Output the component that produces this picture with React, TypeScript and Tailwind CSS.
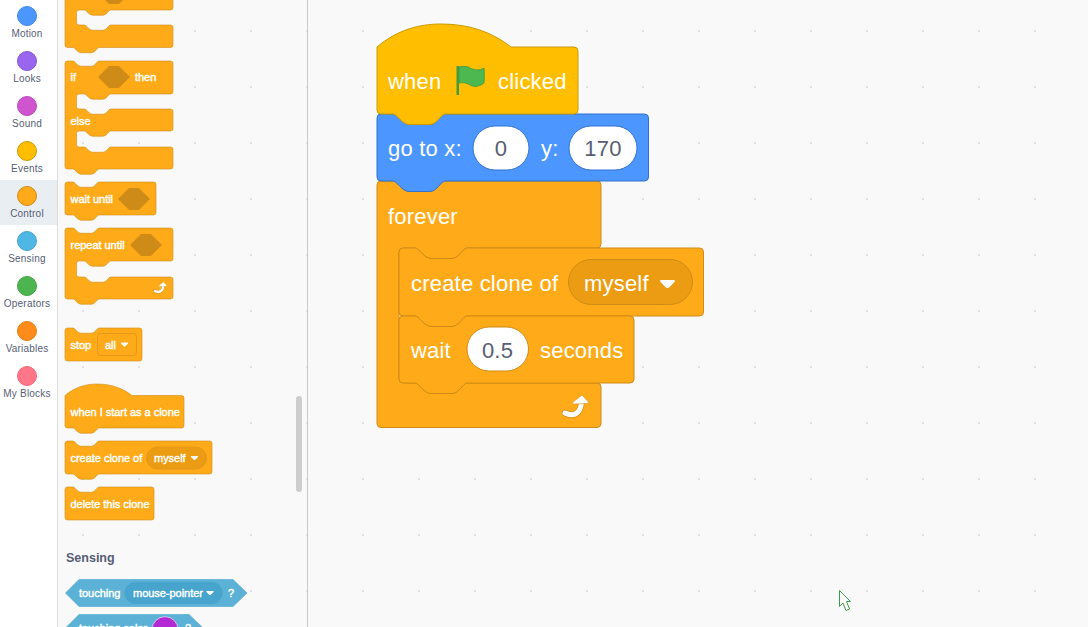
const categories = [
  { name: 'Motion', fill: 'bg-[#4c97ff]', ring: 'border-[#3f86e6]' },
  { name: 'Looks', fill: 'bg-[#9966ee]', ring: 'border-[#8455d8]' },
  { name: 'Sound', fill: 'bg-[#cf55cf]', ring: 'border-[#bd48bd]' },
  { name: 'Events', fill: 'bg-[#ffbf00]', ring: 'border-[#cc9900]' },
  { name: 'Control', fill: 'bg-[#ffab19]', ring: 'border-[#cf8b17]', active: true },
  { name: 'Sensing', fill: 'bg-[#4fb7e3]', ring: 'border-[#45a5cf]' },
  { name: 'Operators', fill: 'bg-[#4cb54f]', ring: 'border-[#45a046]' },
  { name: 'Variables', fill: 'bg-[#ff8c1a]', ring: 'border-[#e67f15]' },
  { name: 'My Blocks', fill: 'bg-[#ff7688]', ring: 'border-[#f56a7c]' },
];

const ORANGE = { fill: '#ffab19', stroke: '#cf8b17' };
const YELLOW = { fill: '#ffbf00', stroke: '#cc9900' };
const BLUE = { fill: '#4c97ff', stroke: '#3373cc' };

// notch going right along a top edge, s = 1 on the workspace, 0.5 in the palette
const notchR = (x: number, y: number, s: number) =>
  `L${x + 16 * s} ${y} C${x + 20 * s} ${y} ${x + 25 * s} ${y + 10.5 * s} ${x + 32 * s} ${y + 10.5 * s} L${x + 53 * s} ${y + 10.5 * s} C${x + 60 * s} ${y + 10.5 * s} ${x + 64 * s} ${y} ${x + 68 * s} ${y} `;
const notchL = (x: number, y: number, s: number) =>
  `L${x + 68 * s} ${y} C${x + 64 * s} ${y} ${x + 60 * s} ${y + 10.5 * s} ${x + 53 * s} ${y + 10.5 * s} L${x + 32 * s} ${y + 10.5 * s} C${x + 25 * s} ${y + 10.5 * s} ${x + 20 * s} ${y} ${x + 16 * s} ${y} `;

const corner = (s: number) => (s === 1 ? 4 : 2.5);

function stackPath(w: number, h: number, s: number, opts: { bottom?: boolean } = {}) {
  const r = corner(s);
  return (
    `M0 ${r} Q0 0 ${r} 0 ` +
    notchR(0, 0, s) +
    `L${w - r} 0 Q${w} 0 ${w} ${r} L${w} ${h - r} Q${w} ${h} ${w - r} ${h} ` +
    (opts.bottom === false ? '' : notchL(0, h, s)) +
    `L${r} ${h} Q0 ${h} 0 ${h - r} Z`
  );
}

function hatPath(w: number, h: number, s: number) {
  const r = corner(s);
  return (
    `M0 ${23 * s} C${20 * s} ${6 * s} ${42 * s} 0 ${64 * s} 0 C${92 * s} 0 ${115 * s} ${8 * s} ${134 * s} ${23 * s} ` +
    `L${w - r} ${23 * s} Q${w} ${23 * s} ${w} ${23 * s + r} L${w} ${h - r} Q${w} ${h} ${w - r} ${h} ` +
    notchL(0, h, s) +
    `L${r} ${h} Q0 ${h} 0 ${h - r} Z`
  );
}

// arms: [top, bottom] of each arm after the first, first = bottom of the first arm
function cPath(w: number, s: number, first: number, arms: [number, number][], notched = true) {
  const r = corner(s);
  const i = 22 * s + (s === 1 ? 0 : 0.5);
  let d = `M0 ${r} Q0 0 ${r} 0 ` + notchR(0, 0, s) + `L${w - r} 0 Q${w} 0 ${w} ${r} `;
  let bottom = first;
  arms.forEach(([top, end], n) => {
    d += `L${w} ${bottom - r} Q${w} ${bottom} ${w - r} ${bottom} ` + notchL(i, bottom, s);
    d += `L${i + r} ${bottom} Q${i} ${bottom} ${i} ${bottom + r} L${i} ${top - r} Q${i} ${top} ${i + r} ${top} `;
    d += notchR(i, top, s) + `L${w - r} ${top} Q${w} ${top} ${w} ${top + r} `;
    bottom = end;
    if (n === arms.length - 1) {
      d += `L${w} ${end - r} Q${w} ${end} ${w - r} ${end} `;
    }
  });
  d += (notched ? notchL(0, bottom, s) : '') + `L${r} ${bottom} Q0 ${bottom} 0 ${bottom - r} Z`;
  return d;
}

function Shape({ d, color, x = 0, y = 0, sw = 1 }: { d: string; color: { fill: string; stroke: string }; x?: number; y?: number; sw?: number }) {
  return <path d={d} transform={`translate(${x} ${y})`} fill={color.fill} stroke={color.stroke} strokeWidth={sw} strokeLinejoin="round" />;
}

function Txt({ x, y, children, anchor }: { x: number; y: number; children: string; anchor?: 'middle' }) {
  return (
    <text x={x} y={y} textAnchor={anchor} className="fill-white">
      {children}
    </text>
  );
}

function Hex({ x, y, w = 32, h = 22 }: { x: number; y: number; w?: number; h?: number }) {
  const q = h / 2;
  return <polygon points={`${x},${y} ${x + q},${y - q} ${x + w - q},${y - q} ${x + w},${y} ${x + w - q},${y + q} ${x + q},${y + q}`} fill="#cf8b17" />;
}

function Caret({ x, y, s = 1, color = '#fff' }: { x: number; y: number; s?: number; color?: string }) {
  return (
    <path
      d={`M${x} ${y} L${x + 14 * s} ${y} Q${x + 15 * s} ${y + 1.5 * s} ${x + 13.5 * s} ${y + 2.5 * s} L${x + 8.5 * s} ${y + 7.5 * s} Q${x + 7 * s} ${y + 8.5 * s} ${x + 5.5 * s} ${y + 7.5 * s} L${x + 0.5 * s} ${y + 2.5 * s} Q${x - 1 * s} ${y + 1 * s} ${x} ${y} Z`}
      fill={color}
    />
  );
}

function LoopArrow({ x, y, s = 1 }: { x: number; y: number; s?: number }) {
  return (
    <g transform={`translate(${x} ${y}) scale(${s})`}>
      <path d="M2 20 C9 23.5 17.5 22.5 18.5 9" fill="none" stroke="#cf8b17" strokeWidth={6.5} strokeLinecap="round" />
      <path d="M2 20 C9 23.5 17.5 22.5 18.5 9" fill="none" stroke="#fff" strokeWidth={5} strokeLinecap="round" />
      <path d="M19 2 L25.5 9 Q25.5 10.500 23.5 10.500 L10.5 11 Q9 10.500 10 9 Z" fill="#fff" stroke="#cf8b17" strokeWidth={0.6} strokeLinejoin="round" />
    </g>
  );
}

function Flag() {
  return (
    <g>
      <path d="M456.500 66 H459 V95 H456.500 Z" fill="#45993d" />
      <path d="M459 67 C463 66 467 66 470 68 C474 70 479 71 484 68 C484.500 73 484.500 79 484 83 C480 86 476 87.500 471 85.500 C467 83 463 82 459 83 Z" fill="#4cb84f" stroke="#45993d" strokeWidth={0.8} strokeLinejoin="round" />
    </g>
  );
}

function PaletteSvg({ className, children }: { className: string; children: React.ReactNode }) {
  return (
    <svg className={`block w-[236px] overflow-visible font-['Liberation_Sans',sans-serif] text-[11px] tracking-[-0.03px] [&_text]:stroke-white [&_text]:stroke-[0.4px] ${className}`}>
      {children}
    </svg>
  );
}

function Palette() {
  return (
    <div className="relative h-full w-[250px] shrink-0 overflow-hidden border-r border-[#c9c9c9] pl-[7px]">
      <PaletteSvg className="-mt-[23px] h-[84px]">
        <Shape sw={0.6} d={cPath(108, 0.5, 33, [[48, 70.5]])} color={ORANGE} />
        <Hex x={33} y={16} />
      </PaletteSvg>
      <PaletteSvg className="h-[121px]">
        <Shape sw={0.6} d={cPath(108, 0.5, 33, [[48, 70], [86, 108]])} color={ORANGE} />
        <Txt x={5.5} y={20}>if</Txt>
        <Hex x={33} y={16} />
        <Txt x={70} y={20}>then</Txt>
        <Txt x={5.5} y={64}>else</Txt>
      </PaletteSvg>
      <PaletteSvg className="h-[46px]">
        <Shape sw={0.6} d={stackPath(91, 33, 0.5)} color={ORANGE} />
        <Txt x={5.5} y={21}>wait until</Txt>
        <Hex x={53} y={17} />
      </PaletteSvg>
      <PaletteSvg className="h-[100px]">
        <Shape sw={0.6} d={cPath(108, 0.5, 33, [[49, 71]])} color={ORANGE} />
        <Txt x={5.5} y={21}>repeat until</Txt>
        <Hex x={65} y={17} />
        <LoopArrow x={89} y={53} s={0.5} />
      </PaletteSvg>
      <PaletteSvg className="h-[56px]">
        <Shape sw={0.6} d={stackPath(77, 33, 0.5, { bottom: false })} color={ORANGE} />
        <Txt x={5.5} y={21}>stop</Txt>
        <rect x={32.5} y={5.5} width={39} height={22} rx={3} fill="#ffab19" stroke="#e3981b" />
        <Txt x={40} y={21}>all</Txt>
        <Caret x={56} y={14.5} s={0.5} />
      </PaletteSvg>
      <PaletteSvg className="h-[57px]">
        <Shape sw={0.6} d={hatPath(119, 44, 0.5)} color={ORANGE} />
        <Txt x={5.5} y={32}>when I start as a clone</Txt>
      </PaletteSvg>
      <PaletteSvg className="h-[46px]">
        <Shape sw={0.6} d={stackPath(147, 33, 0.5)} color={ORANGE} />
        <Txt x={5.5} y={21}>create clone of</Txt>
        <rect x={81.5} y={6} width={60} height={22} rx={11} fill="#ec9c13" stroke="#e3981b" />
        <Txt x={89} y={21}>myself</Txt>
        <Caret x={126} y={15} s={0.5} />
      </PaletteSvg>
      <PaletteSvg className="h-[46px]">
        <Shape sw={0.6} d={stackPath(89, 33, 0.5, { bottom: false })} color={ORANGE} />
        <Txt x={5.5} y={21}>delete this clone</Txt>
      </PaletteSvg>
      <h3 className="mb-[6px] mt-[10px] h-[30px] pl-px text-[12.5px] font-bold leading-[30px] text-[#575e75]">Sensing</h3>
      <PaletteSvg className="h-[35px]">
        <polygon points="0.5,14 14,0.5 168,0.5 182,14 168,27.5 14,27.5" fill="#5cb1d6" stroke="#47a8d1" strokeWidth={0.6} strokeLinejoin="round" />
        <Txt x={14} y={18}>touching</Txt>
        <rect x={59.5} y={3} width={98} height={22} rx={11} fill="#47a4cd" />
        <Txt x={68} y={18}>mouse-pointer</Txt>
        <Caret x={141.5} y={12} s={0.5} />
        <Txt x={163} y={18}>?</Txt>
      </PaletteSvg>
      <PaletteSvg className="h-[35px]">
        <polygon points="0.5,14 14,0.5 124,0.5 138,14 124,27.5 14,27.5" fill="#5cb1d6" stroke="#47a8d1" strokeWidth={0.6} strokeLinejoin="round" />
        <Txt x={14} y={18}>touching color</Txt>
        <circle cx={100} cy={15.7} r={13} fill="#b32ad4" stroke="#fff" strokeWidth={0.6} />
        <Txt x={120} y={18}>?</Txt>
      </PaletteSvg>
      {/* scrollbar thumb */}
      <div className="absolute left-[238px] top-[396px] h-[96px] w-[6px] rounded-[3px] bg-[#cecdce]" />
    </div>
  );
}

function Script() {
  return (
    <svg className="absolute left-[68px] top-[23px] h-[410px] w-[340px] overflow-visible text-[22px] tracking-[0.2px]">
      <g transform="translate(-376 -23)">
        <Shape x={377} y={181} d={cPath(224, 1, 67, [[202, 246.5]], false)} color={ORANGE} />
        <Shape x={399} y={248} d={stackPath(304.5, 68, 1)} color={ORANGE} />
        <Shape x={399} y={316} d={stackPath(235, 67, 1)} color={ORANGE} />
        <Shape x={377} y={114} d={stackPath(271.5, 67, 1)} color={BLUE} />
        <Shape x={377} y={24} d={hatPath(201, 90, 1)} color={YELLOW} />

        <Txt x={388} y={89}>when</Txt>
        <Flag />
        <Txt x={498} y={89}>clicked</Txt>

        <Txt x={388} y={156}>go to x:</Txt>
        <rect x={473} y={126} width={56} height={44} rx={22} fill="#fff" stroke="#3373cc" />
        <text x={501} y={156} textAnchor="middle" fill="#575e75">0</text>
        <Txt x={541} y={156}>y:</Txt>
        <rect x={569} y={126} width={68} height={44} rx={22} fill="#fff" stroke="#3373cc" />
        <text x={603} y={156} textAnchor="middle" fill="#575e75">170</text>

        <Txt x={388} y={224}>forever</Txt>

        <Txt x={411} y={291}>create clone of</Txt>
        <rect x={568.5} y={259.5} width={124} height={45} rx={22.5} fill="#ec9c13" stroke="#cf8b17" />
        <Txt x={584} y={291}>myself</Txt>
        <Caret x={660.5} y={280} s={1} />

        <Txt x={411} y={358}>wait</Txt>
        <rect x={467} y={327} width={61.5} height={44} rx={22} fill="#fff" stroke="#cf8b17" />
        <text x={497.5} y={358} textAnchor="middle" fill="#575e75">0.5</text>
        <Txt x={540} y={358}>seconds</Txt>

        <LoopArrow x={563} y={393} />
      </g>
    </svg>
  );
}

export default function App() {
  return (
    <div className="flex h-[627px] w-[1088px] overflow-hidden bg-white font-['Liberation_Sans',sans-serif]">
      <nav className="flex w-[58px] shrink-0 flex-col border-r border-[#dcdcdc]">
        {categories.map((c) => (
          <div key={c.name} className={`flex h-[45px] w-[57px] shrink-0 flex-col items-center pr-[3px] pt-[6px] ${c.active ? 'bg-[#e9eef2]' : ''}`}>
            <span className={`h-[20px] w-[20px] shrink-0 rounded-full border ${c.fill} ${c.ring}`} />
            <span className="mt-[2px] whitespace-nowrap text-[10px] leading-[12px] tracking-[0.2px] text-[#575e75]">{c.name}</span>
          </div>
        ))}
      </nav>
      <main className="relative flex min-w-0 flex-1 bg-[#f9f9f9] bg-[radial-gradient(circle,#e2e2e2_1px,transparent_1.5px)] bg-[size:56px_56px] bg-[position:-3px_3px]">
        <Palette />
        <div className="relative flex-1">
          <Script />
          {/* mouse pointer caught in the capture */}
          <svg className="absolute left-[530px] top-[589px] h-[24px] w-[16px] overflow-visible">
            <path d="M1.5 1.5 V17.5 L5 14 L8 21.5 L11.5 20 L8.5 12.5 H12.5 Z" fill="#fff" stroke="#3d9b46" strokeWidth={1} />
          </svg>
        </div>
      </main>
    </div>
  );
}
